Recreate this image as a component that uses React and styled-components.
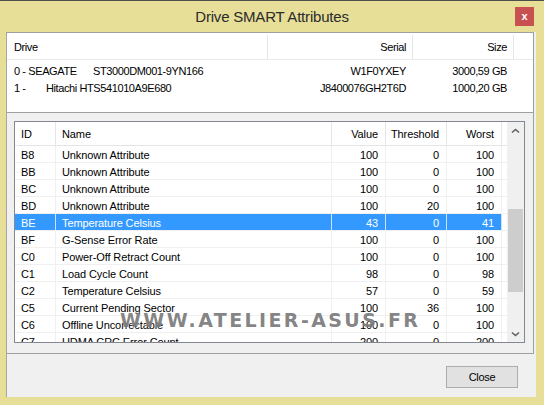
import React from "react";
import styled, { createGlobalStyle } from "styled-components";

const Global = createGlobalStyle`
  html, body {
    margin: 0;
    padding: 0;
    background: #e7de98;
  }
  * {
    box-sizing: border-box;
  }
`;

const Window = styled.div`
  position: relative;
  width: 544px;
  height: 405px;
  display: flex;
  flex-direction: column;
  background: #e7de98;
  border-top: 1px solid #4d4d4d;
  font-family: "Liberation Sans", Arial, sans-serif;
  overflow: hidden;
`;

const TitleBar = styled.div`
  height: 31px;
  flex-shrink: 0;
  display: grid;
  grid-template-columns: 1fr auto 1fr;
  align-items: center;
`;

const Title = styled.div`
  grid-column: 2;
  font-size: 15px;
  letter-spacing: -0.2px;
  color: #2b2b2b;
`;

const CloseBox = styled.div`
  grid-column: 3;
  justify-self: end;
  margin-right: 10px;
  width: 19px;
  height: 19px;
  background: #c75050;
  color: #fff;
  font-size: 11px;
  font-weight: bold;
  display: flex;
  align-items: center;
  justify-content: center;
  padding-bottom: 2px;
`;

const Client = styled.div`
  flex: 1;
  margin: 0 8px 8px 6px;
  background: #f0f0f0;
  border-left: 1px solid #a6a6a6;
  display: flex;
  flex-direction: column;
`;

const UpperPanel = styled.div`
  width: 527px;
  height: 322px;
  flex-shrink: 0;
  border-right: 1px solid #a0a0a0;
  border-bottom: 1px solid #a0a0a0;
  display: flex;
  flex-direction: column;
  gap: 8px;
`;

const DriveList = styled.div`
  height: 81px;
  flex-shrink: 0;
  background: #fff;
  border-top: 1px solid #a0a0a0;
  border-bottom: 1px solid #a0a0a0;
  font-size: 11px;
  letter-spacing: -0.4px;
  color: #000;
`;

const DriveHeader = styled.div`
  height: 27px;
  display: flex;
  border-bottom: 1px solid #eaeaea;
  padding-top: 2px;
`;

const DriveRows = styled.div`
  padding-top: 2px;
`;

const DriveRow = styled.div`
  height: 17px;
  display: flex;
  align-items: center;
`;

const DCell = styled.div`
  width: ${({ $w }) => $w}px;
  flex-shrink: 0;
  height: 100%;
  display: flex;
  align-items: center;
  justify-content: ${({ $right }) => ($right ? "flex-end" : "flex-start")};
  padding: ${({ $right }) => ($right ? "0 6px 0 0" : "0 0 0 7px")};
  border-right: 1px solid ${({ $head }) => ($head ? "#e5e5e5" : "transparent")};
  white-space: pre;
`;

const Lead = styled.span`
  display: inline-block;
  width: ${({ $w }) => $w}px;
`;

const AttrList = styled.div`
  margin-left: 7px;
  width: 511px;
  height: 222px;
  flex-shrink: 0;
  background: #fff;
  border: 1px solid #828790;
  display: flex;
  font-size: 11px;
  letter-spacing: -0.1px;
`;

const TableArea = styled.div`
  flex: 1;
  display: flex;
  flex-direction: column;
  overflow: hidden;
`;

const HeadRow = styled.div`
  height: 24px;
  flex-shrink: 0;
  display: flex;
  border-bottom: 1px solid #e5e5e5;
  color: #000;
`;

const Row = styled.div`
  height: 17px;
  flex-shrink: 0;
  display: flex;
  border-bottom: 1px solid #f0f0f0;
  color: ${({ $sel }) => ($sel ? "#fff" : "#000")};
`;

const Cell = styled.div`
  width: ${({ $w }) => $w}px;
  flex-shrink: 0;
  display: flex;
  align-items: center;
  justify-content: ${({ $right }) => ($right ? "flex-end" : "flex-start")};
  padding: 1px 7px 0 6px;
  white-space: nowrap;
  overflow: hidden;
  background: ${({ $sel }) => ($sel ? "#3399ff" : "transparent")};
  border-right: 1px solid
    ${({ $head, $sel }) => ($head ? "#e5e5e5" : $sel ? "#c9e3ff" : "#f0f0f0")};
`;

const Scrollbar = styled.div`
  width: 17px;
  flex-shrink: 0;
  background: #f0f0f0;
  display: flex;
  flex-direction: column;
`;

const ArrowBtn = styled.div`
  height: 17px;
  flex-shrink: 0;
  display: flex;
  align-items: center;
  justify-content: center;
`;

const Track = styled.div`
  flex: 1;
`;

const Thumb = styled.div`
  margin: 70px 1px 0 1px;
  height: 83px;
  background: #cdcdcd;
`;

const BottomBar = styled.div`
  flex: 1;
  display: flex;
  justify-content: flex-end;
  align-items: flex-start;
  padding: 12px 18px 0 0;
`;

const Button = styled.div`
  width: 72px;
  height: 22px;
  border: 1px solid #adadad;
  background: #e1e1e1;
  display: flex;
  align-items: center;
  justify-content: center;
  font-size: 11px;
  letter-spacing: -0.3px;
  color: #000;
`;

const Watermark = styled.div`
  position: absolute;
  left: 120px;
  top: 310px;
  font-family: "DejaVu Sans", sans-serif;
  font-weight: bold;
  font-size: 19px;
  line-height: 1;
  letter-spacing: 2.4px;
  color: rgba(100, 100, 100, 0.8);
  text-shadow: 0 0 1px rgba(255, 255, 255, 0.7);
  pointer-events: none;
  white-space: nowrap;
`;

const Chevron = ({ down }) => (
  <svg width="9" height="6" viewBox="0 0 9 6">
    <polyline
      points={down ? "1,1.5 4.5,4.5 8,1.5" : "1,4.5 4.5,1.5 8,4.5"}
      fill="none"
      stroke="#606060"
      strokeWidth="1.6"
    />
  </svg>
);

const drives = [
  { lead: "0 - SEAGATE", w: 79, model: "ST3000DM001-9YN166", serial: "W1F0YXEY", size: "3000,59 GB" },
  { lead: "1 -", w: 32, model: "Hitachi HTS541010A9E680", serial: "J8400076GH2T6D", size: "1000,20 GB" },
];

const cols = [
  { key: "id", label: "ID", w: 41 },
  { key: "name", label: "Name", w: 276 },
  { key: "value", label: "Value", w: 54, right: true },
  { key: "threshold", label: "Threshold", w: 61, right: true },
  { key: "worst", label: "Worst", w: 55, right: true },
];

const attrs = [
  { id: "B8", name: "Unknown Attribute", value: 100, threshold: 0, worst: 100 },
  { id: "BB", name: "Unknown Attribute", value: 100, threshold: 0, worst: 100 },
  { id: "BC", name: "Unknown Attribute", value: 100, threshold: 0, worst: 100 },
  { id: "BD", name: "Unknown Attribute", value: 100, threshold: 20, worst: 100 },
  { id: "BE", name: "Temperature Celsius", value: 43, threshold: 0, worst: 41, sel: true },
  { id: "BF", name: "G-Sense Error Rate", value: 100, threshold: 0, worst: 100 },
  { id: "C0", name: "Power-Off Retract Count", value: 100, threshold: 0, worst: 100 },
  { id: "C1", name: "Load Cycle Count", value: 98, threshold: 0, worst: 98 },
  { id: "C2", name: "Temperature Celsius", value: 57, threshold: 0, worst: 59 },
  { id: "C5", name: "Current Pending Sector", value: 100, threshold: 36, worst: 100 },
  { id: "C6", name: "Offline Uncorrectable", value: 100, threshold: 0, worst: 100 },
  { id: "C7", name: "UDMA CRC Error Count", value: 200, threshold: 0, worst: 200 },
];

export default function App() {
  return (
    <Window>
      <Global />
      <TitleBar>
        <Title>Drive SMART Attributes</Title>
        <CloseBox>x</CloseBox>
      </TitleBar>

      <Client>
        <UpperPanel>
          <DriveList>
            <DriveHeader>
              <DCell $w={261} $head>Drive</DCell>
              <DCell $w={145} $head $right>Serial</DCell>
              <DCell $w={101} $head $right>Size</DCell>
            </DriveHeader>
            <DriveRows>
              {drives.map((d) => (
                <DriveRow key={d.serial}>
                  <DCell $w={261}>
                    <Lead $w={d.w}>{d.lead}</Lead>
                    {d.model}
                  </DCell>
                  <DCell $w={145} $right>{d.serial}</DCell>
                  <DCell $w={101} $right>{d.size}</DCell>
                </DriveRow>
              ))}
            </DriveRows>
          </DriveList>

          <AttrList>
            <TableArea>
              <HeadRow>
                {cols.map((c) => (
                  <Cell key={c.key} $w={c.w} $right={c.right} $head>
                    {c.label}
                  </Cell>
                ))}
              </HeadRow>
              {attrs.map((a) => (
                <Row key={a.id} $sel={a.sel}>
                  {cols.map((c) => (
                    <Cell key={c.key} $w={c.w} $right={c.right} $sel={a.sel}>
                      {a[c.key]}
                    </Cell>
                  ))}
                </Row>
              ))}
            </TableArea>
            <Scrollbar>
              <ArrowBtn>
                <Chevron />
              </ArrowBtn>
              <Track>
                <Thumb />
              </Track>
              <ArrowBtn>
                <Chevron down />
              </ArrowBtn>
            </Scrollbar>
          </AttrList>
        </UpperPanel>

        <BottomBar>
          <Button>Close</Button>
        </BottomBar>
      </Client>

      <Watermark>WWW.ATELIER-ASUS.FR</Watermark>
    </Window>
  );
}
